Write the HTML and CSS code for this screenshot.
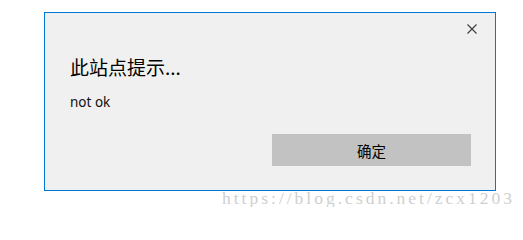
FILE: index.html
```html
<!DOCTYPE html>
<html lang="zh">
<head>
<meta charset="utf-8">
<title>此站点提示</title>
<link rel="stylesheet" href="styles.css">
</head>
<body>
<div class="dialog">
  <div class="dialog-head">
    <svg class="close" width="10" height="10" viewBox="0 0 10 10" aria-label="关闭">
      <path d="M0.5 0.5 L9.5 9.5 M9.5 0.5 L0.5 9.5" stroke="#3a3a3a" stroke-width="1.1" fill="none"/>
    </svg>
  </div>
  <div class="dialog-body">
    <div class="title">此站点提示...</div>
    <div class="message">not ok</div>
  </div>
  <div class="dialog-foot">
    <div class="btn">确定</div>
  </div>
</div>
<div class="watermark">https://blog.csdn.net/zcx1203</div>
</body>
</html>
```
FILE: styles.css
```css
html, body {
  margin: 0;
  padding: 0;
  background: #ffffff;
}
body {
  padding-top: 12px;
  font-family: "Noto Sans", "Noto Sans CJK SC", sans-serif;
}
.dialog {
  box-sizing: border-box;
  margin-left: 44px;
  width: 452px;
  height: 179px;
  border: 1px solid #0078d7;
  background: #f0f0f0;
  display: flex;
  flex-direction: column;
}
.dialog-head {
  display: flex;
  justify-content: flex-end;
  padding: 11px 18px 0 0;
  height: 10px;
}
.close {
  display: block;
}
.dialog-body {
  padding: 20px 0 0 25px;
}
.title {
  font-family: "Noto Sans CJK SC", sans-serif;
  font-size: 19px;
  line-height: 26px;
  color: #000;
}
.message {
  margin-top: 13px;
  font-family: "Noto Sans", "Noto Sans CJK SC", sans-serif;
  font-size: 13.5px;
  line-height: 18px;
  color: #111;
}
.dialog-foot {
  margin-top: auto;
  display: flex;
  justify-content: flex-end;
  padding: 0 24px 24px 0;
}
.btn {
  width: 199px;
  height: 32px;
  background: #c2c2c2;
  display: flex;
  align-items: center;
  justify-content: center;
  font-family: "Noto Sans CJK SC", sans-serif;
  font-size: 14.5px;
  color: #000;
}
.watermark {
  margin-left: 222px;
  margin-top: -2px;
  font-family: "Liberation Serif", serif;
  font-size: 17.5px;
  letter-spacing: 3px;
  line-height: 18px;
  color: #cfcfcf;
  white-space: nowrap;
}
```
